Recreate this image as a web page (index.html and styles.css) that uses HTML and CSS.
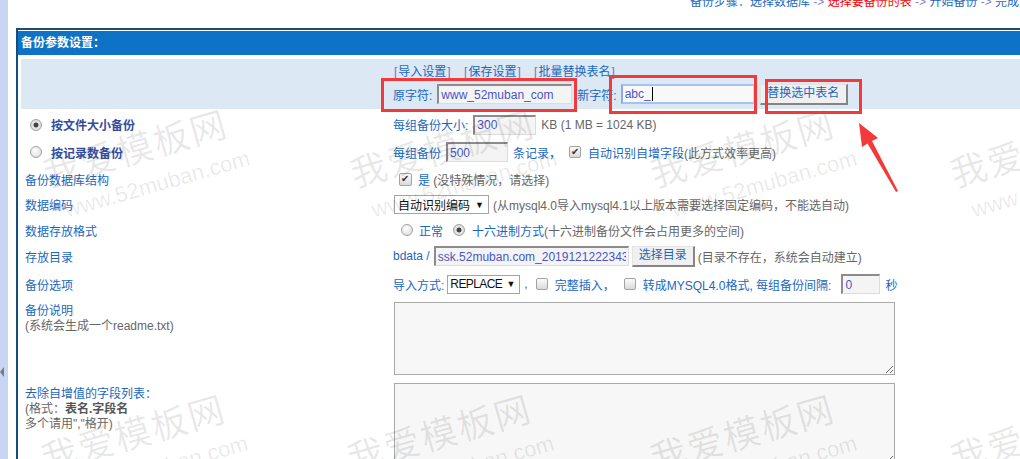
FILE: index.html
```html
<!DOCTYPE html>
<html lang="zh-CN">
<head>
    <meta charset="UTF-8">
    <title>备份参数设置</title>
    <link rel="stylesheet" href="styles.css">
</head>
<body>

<div class="frame">
    <div class="side"><span class="side-arrow"></span></div>
    <div class="main">
        <div class="steps">
            <span class="steps-in">备份步骤：选择数据库 <i>-&gt;</i> <span class="cur">选择要备份的表</span> <i>-&gt;</i> 开始备份 <i>-&gt;</i> 完成</span>
        </div>

        <div class="panel">
            <div class="panel-head">备份参数设置：</div>

            <div class="tools">
                <div class="links">
                    <a href="#"><span class="br">[</span>导入设置<span class="br">]</span></a>
                    <a href="#"><span class="br">[</span>保存设置<span class="br">]</span></a>
                    <a href="#"><span class="br">[</span>批量替换表名<span class="br">]</span></a>
                </div>
                <div class="replace">
                    <span>原字符:</span>
                    <input type="text" class="txt w-old" value="www_52muban_com">
                    <span class="gap5">新字符:</span>
                    <span class="txt focus w-new">abc_<i class="caret"></i></span>
                    <button class="btn btn-replace">替换选中表名</button>
                </div>
            </div>

            <div class="row row-size">
                <div class="lbl"><input type="radio" class="rd" name="mode" checked><b class="mode">按文件大小备份</b></div>
                <div class="val">
                    <span>每组备份大小:</span>
                    <input type="text" class="txt w-size" value="300">
                    <span class="note gap5">KB (1 MB = 1024 KB)</span>
                </div>
            </div>

            <div class="row row-count">
                <div class="lbl"><input type="radio" class="rd" name="mode"><b class="mode">按记录数备份</b></div>
                <div class="val">
                    <span>每组备份</span>
                    <input type="text" class="txt w-count" value="500">
                    <span class="gap5">条记录，</span>
                    <input type="checkbox" class="cb cb-auto" checked>
                    <span class="gap7">自动识别自增字段</span><span class="note">(此方式效率更高)</span>
                </div>
            </div>

            <div class="row row-struct">
                <div class="lbl">备份数据库结构</div>
                <div class="val">
                    <input type="checkbox" class="cb cb-struct" checked>
                    <span class="gap6">是</span><span class="note">&nbsp;(没特殊情况，请选择)</span>
                </div>
            </div>

            <div class="row row-charset">
                <div class="lbl">数据编码</div>
                <div class="val">
                    <span class="sel sel-charset">自动识别编码<i>▼</i></span>
                    <span class="note gap4">(从mysql4.0导入mysql4.1以上版本需要选择固定编码，不能选自动)</span>
                </div>
            </div>

            <div class="row row-format">
                <div class="lbl">数据存放格式</div>
                <div class="val">
                    <input type="radio" class="rd rd-normal" name="fmt">
                    <span class="gap6">正常</span>
                    <input type="radio" class="rd rd-hex" name="fmt" checked>
                    <span class="gap7">十六进制方式</span><span class="note">(十六进制备份文件会占用更多的空间)</span>
                </div>
            </div>

            <div class="row row-dir">
                <div class="lbl">存放目录</div>
                <div class="val">
                    <span>bdata /</span>
                    <input type="text" class="txt w-dir" value="ssk.52muban.com_20191212223431">
                    <button class="btn btn-dir">选择目录</button>
                    <span class="note gap3">(目录不存在，系统会自动建立)</span>
                </div>
            </div>

            <div class="row row-opt">
                <div class="lbl">备份选项</div>
                <div class="val">
                    <span>导入方式:</span>
                    <span class="sel sel-mode"><span class="sel-text">REPLACE</span><i>▼</i></span>
                    <span class="gap4">,</span>
                    <input type="checkbox" class="cb cb-full">
                    <span class="gap7">完整插入，</span>
                    <input type="checkbox" class="cb cb-old">
                    <span class="gap7">转成MYSQL4.0格式, 每组备份间隔:</span>
                    <input type="text" class="txt w-sleep" value="0">
                    <span class="gap5">秒</span>
                </div>
            </div>

            <div class="row row-note">
                <div class="lbl lbl-multi">
                    备份说明<br>
                    <span class="note">(系统会生成一个readme.txt)</span>
                </div>
                <div class="val"><textarea class="area"></textarea></div>
            </div>

            <div class="row row-skip">
                <div class="lbl lbl-multi">
                    去除自增值的字段列表：<br>
                    <span class="note">(格式：<b>表名.字段名</b><br>多个请用","格开)</span>
                </div>
                <div class="val"><textarea class="area area-skip"></textarea></div>
            </div>
        </div>
    </div>
</div>

<!-- watermark + red marks laid over the screenshot -->
<div class="wm wm1"><div class="wm-cn">我爱模板网</div><div class="wm-en">www.52muban.com</div></div>
<div class="wm wm2"><div class="wm-cn">我爱模板网</div><div class="wm-en">www.52muban.com</div></div>
<div class="wm wm3"><div class="wm-cn">我爱模板网</div><div class="wm-en">www.52muban.com</div></div>
<div class="wm wm4"><div class="wm-cn">我爱模板网</div><div class="wm-en">www.52muban.com</div></div>
<div class="wm wm5"><div class="wm-cn">我爱模板网</div><div class="wm-en">www.52muban.com</div></div>
<div class="wm wm6"><div class="wm-cn">我爱模板网</div><div class="wm-en">www.52muban.com</div></div>
<div class="wm wm7"><div class="wm-cn">我爱模板网</div><div class="wm-en">www.52muban.com</div></div>
<div class="wm wm8"><div class="wm-cn">我爱模板网</div><div class="wm-en">www.52muban.com</div></div>

<div class="mark mark-old"></div>
<div class="mark mark-new"></div>
<div class="mark mark-btn"></div>
<svg class="mark-arrow" width="60" height="85" viewBox="0 0 60 85">
    <polygon points="9,8 28,23 22,26 48,76 46,77 17.5,28.5 12,32" fill="#f23a3a"/>
</svg>

</body>
</html>
```

FILE: styles.css
```css
body {
    margin: 0;
    height: 459px;
    overflow: hidden;
    position: relative;
    font-family: "Liberation Sans", "Noto Sans CJK SC", sans-serif;
    font-size: 12px;
    color: #1a67c0;
    background: #fff;
}
.frame {
    display: flex;
    height: 459px;
}
.side {
    flex: none;
    width: 8px;
    background: #c9d5f5;
}
.side-arrow {
    display: block;
    margin-top: 367px;
    width: 0;
    height: 0;
    border-top: 5px solid transparent;
    border-bottom: 5px solid transparent;
    border-right: 4px solid #7a7a7a;
}
.main {
    flex: 1;
    min-width: 0;
    padding-left: 8px;
}

/* steps line, mostly scrolled off the top */
.steps {
    height: 28px;
    padding-left: 674px;
    white-space: nowrap;
}
.steps-in {
    display: block;
    position: relative;
    top: -5px;
    line-height: 14px;
}
.steps i {
    font-style: normal;
    color: #8a7fd0;
}
.steps .cur {
    color: #f00;
}

.panel {
    border-top: 2px solid #134f78;
    border-left: 2px solid #134f78;
    margin-right: -40px;
    padding-top: 1px;
}
.panel-head {
    height: 24px;
    line-height: 24px;
    padding-left: 3px;
    background: #0e72c6;
    color: #fff;
    font-weight: bold;
}
.tools {
    margin: 4px 0 0 3px;
    height: 50px;
    box-sizing: border-box;
    padding: 6px 0 0 372px;
    background: #dce8f3;
}
.links {
    line-height: 14px;
}
.links a {
    color: #1a67c0;
    text-decoration: none;
    margin-right: 8px;
}
.links .br {
    color: #7b6fd0;
    margin: 0 1px;
}
.replace {
    display: flex;
    align-items: center;
    height: 22px;
    margin-top: 4px;
    white-space: nowrap;
}

.row {
    display: flex;
    align-items: center;
    margin-left: 3px;
}
.lbl {
    flex: none;
    width: 372px;
    box-sizing: border-box;
    padding-left: 4px;
    display: flex;
    align-items: center;
}
.val {
    display: flex;
    align-items: center;
    white-space: nowrap;
}
.row-size { height: 29px; padding-top: 2px; box-sizing: border-box; }
.row-count { height: 28px; }
.row-struct { height: 26px; }
.row-charset { height: 25px; }
.row-format { height: 26px; }
.row-dir { height: 26px; }
.row-opt { height: 30px; }
.row-note { height: 80px; align-items: flex-start; }
.row-skip { height: 90px; align-items: flex-start; }
.lbl-multi {
    display: block;
    line-height: 15px;
    padding-top: 5px;
}
.row-skip .lbl-multi {
    padding-top: 8px;
}
.note {
    color: #666;
}
.note b {
    color: #555;
}
b.mode {
    color: #334d9e;
    margin-left: 9px;
}

.gap3 { margin-left: 3px; }
.gap4 { margin-left: 4px; }
.gap5 { margin-left: 5px; }
.gap6 { margin-left: 6px; }
.gap7 { margin-left: 7px; }

/* inputs */
.txt {
    display: inline-block;
    box-sizing: border-box;
    height: 20px;
    margin: 0;
    padding: 0 2px;
    border-style: solid;
    border-width: 2px 1px 1px 2px;
    border-color: #8c8c8c #dcdcdc #dcdcdc #8c8c8c;
    background: #f4f4f4;
    color: #4a55c8;
    font: inherit;
    line-height: 16px;
    outline: none;
}
.w-old { width: 135px; margin-left: 5px; }
.focus {
    border-width: 2px 1px 2px 2px;
    border-color: #a6c2f2 #c8d8f4 #a6c2f2 #8aa9e6;
    background: #f8f8f8;
}
.w-new { width: 133px; margin-left: 4px; }
.caret {
    display: inline-block;
    width: 1px;
    height: 14px;
    margin-left: 1px;
    background: #000;
    vertical-align: -3px;
}
.w-size { width: 63px; margin-left: 5px; }
.w-count { width: 62px; margin-left: 5px; }
.w-dir { width: 195px; margin-left: 4px; }
.w-sleep { width: 39px; margin-left: 10px; }

.btn {
    box-sizing: border-box;
    height: 21px;
    margin: 0;
    padding: 0 6px;
    border-style: solid;
    border-width: 1px 2px 2px 1px;
    border-color: #e4e4e4 #858585 #858585 #e4e4e4;
    background: #f0f0f0;
    color: #1a67c0;
    font: inherit;
    line-height: 17px;
}
.btn-replace { width: 88px; margin-left: 6px; }
.btn-dir { width: 63px; margin-left: 3px; }

.sel {
    display: inline-flex;
    align-items: center;
    justify-content: space-between;
    box-sizing: border-box;
    height: 19px;
    padding: 0 4px 0 3px;
    border: 1px solid #a5a5a5;
    background: #fff;
    color: #111;
}
.sel i {
    font-style: normal;
    font-size: 9px;
}
.sel-charset { width: 95px; margin-left: 1px; }
.sel-mode { width: 73px; margin-left: 3px; padding-left: 2px; }
.sel-text {
    letter-spacing: -0.6px;
}

.rd, .cb {
    -webkit-appearance: none;
    appearance: none;
    position: relative;
    flex: none;
    width: 12px;
    height: 12px;
    margin: 0;
    box-sizing: border-box;
    border: 1px solid #a3a3a3;
}
.rd {
    border-radius: 50%;
    background: radial-gradient(circle at 40% 35%, #fff, #d6d6d6);
}
.rd:checked {
    background: radial-gradient(circle, #444 0 2.2px, #e8e8e8 2.8px, #cfcfcf 100%);
}
.lbl .rd { margin-left: 5px; }
.rd-normal { margin-left: 8px; }
.rd-hex { margin-left: 10px; }

.cb {
    border-radius: 2px;
    background: linear-gradient(#fbfbfb, #dadada);
}
.cb:checked::after {
    content: "\2714";
    position: absolute;
    left: 1px;
    top: -1px;
    font-size: 10px;
    line-height: 11px;
    color: #333;
}
.cb-auto { margin-left: 8px; }
.cb-struct { margin-left: 6px; width: 13px; height: 13px; }
.cb-full { margin-left: 8px; }
.cb-old { margin-left: 9px; }

.area {
    display: block;
    box-sizing: border-box;
    width: 501px;
    height: 73px;
    margin: 3px 0 0 1px;
    border: 1px solid #a9a9a9;
    background: #f7f7f7;
}
.area-skip {
    margin-top: 4px;
    height: 82px;
}

/* watermark */
.wm {
    position: absolute;
    transform: rotate(-16deg);
    transform-origin: 0 0;
    color: rgba(0, 0, 0, 0.09);
    white-space: nowrap;
    pointer-events: none;
}
.wm-cn {
    font-family: "Noto Sans CJK SC", sans-serif;
    font-size: 36px;
    letter-spacing: 2px;
    line-height: 40px;
}
.wm-en {
    font-family: "Liberation Sans", sans-serif;
    font-size: 22px;
    line-height: 26px;
    margin: 10px 0 0 10px;
}
.wm1 { left: 38px; top: 153px; }
.wm2 { left: 345px; top: 153px; }
.wm3 { left: 645px; top: 153px; }
.wm4 { left: 945px; top: 153px; }
.wm5 { left: 36px; top: 438px; }
.wm6 { left: 342px; top: 438px; }
.wm7 { left: 645px; top: 438px; }
.wm8 { left: 945px; top: 438px; }

/* red annotation boxes */
.mark {
    position: absolute;
    box-sizing: border-box;
    border: 3px solid #f23a3a;
}
.mark-old { left: 381px; top: 78px; width: 196px; height: 34px; }
.mark-new { left: 609px; top: 75px; width: 148px; height: 39px; }
.mark-btn { left: 765px; top: 79px; width: 97px; height: 35px; }
.mark-arrow {
    position: absolute;
    left: 850px;
    top: 115px;
}
```
